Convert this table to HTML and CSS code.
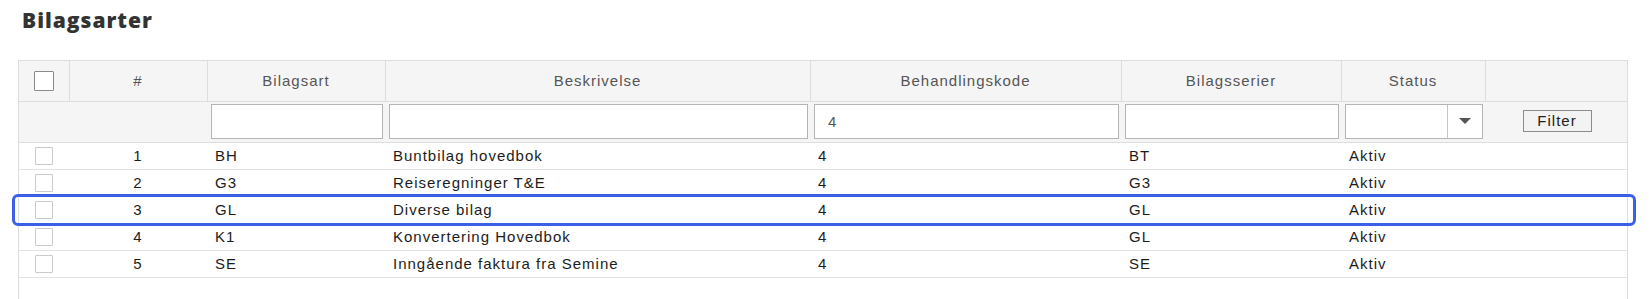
FILE: index.html
```html
<!DOCTYPE html>
<html lang="no">
<head>
<meta charset="utf-8">
<title>Bilagsarter</title>
<link rel="stylesheet" href="styles.css">
</head>
<body>
<div class="page">
  <h1 class="title">Bilagsarter</h1>
  <div class="grid">
    <table class="grid-table">
      <colgroup>
        <col class="c-check">
        <col class="c-num">
        <col class="c-art">
        <col class="c-desc">
        <col class="c-code">
        <col class="c-series">
        <col class="c-status">
        <col class="c-action">
      </colgroup>
      <thead>
        <tr class="head-row">
          <th class="cell-check"><span class="checkbox checkbox-head"></span></th>
          <th>#</th>
          <th>Bilagsart</th>
          <th>Beskrivelse</th>
          <th>Behandlingskode</th>
          <th>Bilagsserier</th>
          <th>Status</th>
          <th></th>
        </tr>
        <tr class="filter-row">
          <td></td>
          <td></td>
          <td><input class="filter-input" type="text" value=""></td>
          <td><input class="filter-input" type="text" value=""></td>
          <td><input class="filter-input" type="text" value="4"></td>
          <td><input class="filter-input" type="text" value=""></td>
          <td>
            <div class="select">
              <span class="select-value"></span>
              <span class="select-btn">
                <svg width="12" height="7" viewBox="0 0 12 7"><path d="M0 0 H12 L6 6 Z" fill="#555"/></svg>
              </span>
            </div>
          </td>
          <td class="cell-action"><button class="filter-btn" type="button">Filter</button></td>
        </tr>
      </thead>
      <tbody>
        <tr>
          <td class="cell-check"><span class="checkbox"></span></td>
          <td class="cell-num">1</td>
          <td>BH</td>
          <td>Buntbilag hovedbok</td>
          <td>4</td>
          <td>BT</td>
          <td>Aktiv</td>
          <td></td>
        </tr>
        <tr>
          <td class="cell-check"><span class="checkbox"></span></td>
          <td class="cell-num">2</td>
          <td>G3</td>
          <td>Reiseregninger T&amp;E</td>
          <td>4</td>
          <td>G3</td>
          <td>Aktiv</td>
          <td></td>
        </tr>
        <tr>
          <td class="cell-check"><span class="checkbox"></span></td>
          <td class="cell-num">3</td>
          <td>GL</td>
          <td>Diverse bilag</td>
          <td>4</td>
          <td>GL</td>
          <td>Aktiv</td>
          <td></td>
        </tr>
        <tr>
          <td class="cell-check"><span class="checkbox"></span></td>
          <td class="cell-num">4</td>
          <td>K1</td>
          <td>Konvertering Hovedbok</td>
          <td>4</td>
          <td>GL</td>
          <td>Aktiv</td>
          <td></td>
        </tr>
        <tr>
          <td class="cell-check"><span class="checkbox"></span></td>
          <td class="cell-num">5</td>
          <td>SE</td>
          <td>Inngående faktura fra Semine</td>
          <td>4</td>
          <td>SE</td>
          <td>Aktiv</td>
          <td></td>
        </tr>
      </tbody>
    </table>
    <div class="highlight"></div>
  </div>
</div>
</body>
</html>
```

FILE: styles.css
```css
* { box-sizing: border-box; }

html, body {
  margin: 0;
  padding: 0;
  background: #ffffff;
  overflow: hidden;
}

.page {
  padding: 6px 21px 0 18px;
  font-family: "Liberation Sans", Arial, sans-serif;
  font-size: 15px;
  letter-spacing: 1px;
  color: #1c1c1c;
}

.title {
  margin: 0 0 0 4px;
  font-family: "Open Sans", "Liberation Sans", sans-serif;
  font-weight: 800;
  font-size: 21px;
  line-height: 28px;
  letter-spacing: 1px;
  color: #333333;
}

.grid {
  position: relative;
  margin-top: 26px;
  width: 1610px;
  height: 245px;
  border: 1px solid #dddddd;
  border-bottom: none;
}

.grid-table {
  width: 1608px;
  table-layout: fixed;
  border-collapse: collapse;
}

.c-check { width: 50px; }
.c-num { width: 138px; }
.c-art { width: 178px; }
.c-desc { width: 425px; }
.c-code { width: 311px; }
.c-series { width: 220px; }
.c-status { width: 144px; }
.c-action { width: 142px; }

.head-row th {
  height: 40px;
  padding: 0;
  background: #f5f5f5;
  border-right: 1px solid #dddddd;
  border-bottom: 1px solid #dddddd;
  font-weight: 400;
  color: #555555;
  text-align: center;
  vertical-align: middle;
}

.head-row th:last-child { border-right: none; }

.filter-row td {
  height: 40px;
  padding: 2px 2px 3px 4px;
  background: #f5f5f5;
  border-bottom: 1px solid #dddddd;
  vertical-align: middle;
}

.filter-input {
  display: block;
  width: 100%;
  height: 35px;
  margin: 0;
  padding: 0 0 0 13px;
  border: 1px solid #b4b4b4;
  border-radius: 0;
  background: #ffffff;
  font-family: "Liberation Sans", Arial, sans-serif;
  font-size: 15px;
  letter-spacing: 1px;
  color: #555555;
  outline: none;
}

.select {
  display: flex;
  height: 35px;
  border: 1px solid #b4b4b4;
  background: #ffffff;
}

.select-value { flex: 1; }

.select-btn {
  width: 35px;
  display: flex;
  align-items: center;
  justify-content: center;
  border-left: 1px solid #c4c4c4;
}

.cell-action { text-align: center; }

.filter-btn {
  width: 69px;
  height: 22px;
  padding: 0;
  border: 1px solid #8c8c8c;
  border-radius: 0;
  background: #f3f3f3;
  font-family: "Liberation Sans", Arial, sans-serif;
  font-size: 15px;
  letter-spacing: 1px;
  color: #222222;
  line-height: 20px;
}

tbody td {
  height: 27px;
  padding: 0 0 0 8px;
  border-bottom: 1px solid #e1e1e1;
  white-space: nowrap;
  vertical-align: middle;
}

tbody td.cell-check,
.head-row th.cell-check {
  padding: 0;
  text-align: center;
}

tbody td.cell-num {
  padding: 0;
  text-align: center;
}

.checkbox {
  display: inline-block;
  vertical-align: middle;
  width: 18px;
  height: 18px;
  border: 1px solid #cacaca;
  border-radius: 1px;
  background: #ffffff;
}

.checkbox-head {
  width: 20px;
  height: 20px;
  border-color: #8a8a8a;
}

.highlight {
  position: absolute;
  left: -7px;
  top: 133px;
  width: 1624px;
  height: 32px;
  border: 3px solid #3b5fe6;
  border-radius: 6px;
  pointer-events: none;
}
```
